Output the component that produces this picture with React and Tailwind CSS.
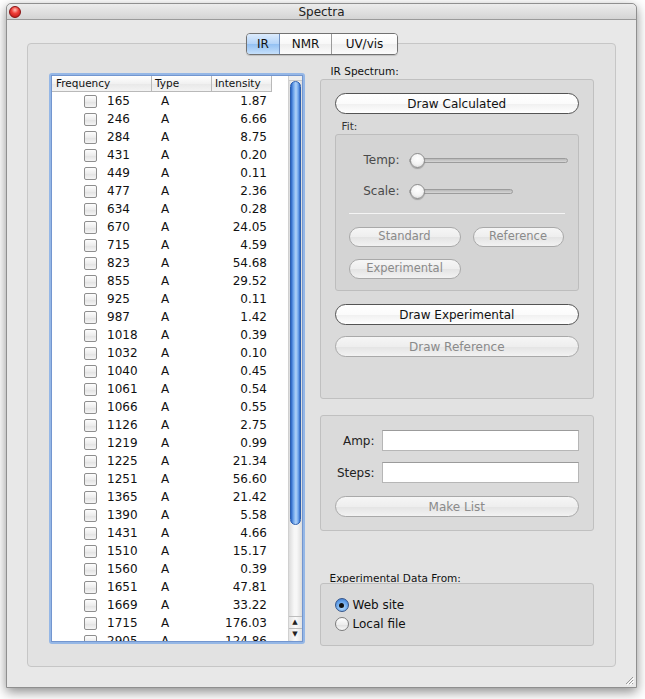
import React from 'react';

const rows = [
  ['165', '1.87'], ['246', '6.66'], ['284', '8.75'], ['431', '0.20'], ['449', '0.11'],
  ['477', '2.36'], ['634', '0.28'], ['670', '24.05'], ['715', '4.59'], ['823', '54.68'],
  ['855', '29.52'], ['925', '0.11'], ['987', '1.42'], ['1018', '0.39'], ['1032', '0.10'],
  ['1040', '0.45'], ['1061', '0.54'], ['1066', '0.55'], ['1126', '2.75'], ['1219', '0.99'],
  ['1225', '21.34'], ['1251', '56.60'], ['1365', '21.42'], ['1390', '5.58'], ['1431', '4.66'],
  ['1510', '15.17'], ['1560', '0.39'], ['1651', '47.81'], ['1669', '33.22'], ['1715', '176.03'],
  ['2905', '124.86'],
];

// aqua push button, enabled or greyed out
const AquaButton = ({ label, disabled, className = '' }) => (
  <div
    className={
      (disabled
        ? 'border-[#a9a9a9] text-[#8a8a8a] bg-[linear-gradient(to_bottom,#f6f6f6_0%,#eeeeee_50%,#e4e4e4_52%,#f2f2f2_100%)] '
        : 'border-[#545454] text-[#111] bg-[linear-gradient(to_bottom,#ffffff_0%,#fbfbfb_50%,#f0f0f0_52%,#ffffff_100%)] ') +
      'flex items-center justify-center rounded-full border ' + className
    }
  >
    {label}
  </div>
);

const Slider = ({ width }) => (
  <div className="relative flex items-center h-[20px]" style={{ width }}>
    <div className="h-[5px] w-full rounded-full border border-[#9c9c9c] bg-[linear-gradient(to_bottom,#b8b8b8,#d6d6d6)]" />
    <div className="absolute left-[1px] top-[3px] w-[15px] h-[15px] rounded-full border border-[#8d8d8d] bg-[radial-gradient(circle_at_50%_35%,#ffffff_0%,#f3f3f3_55%,#cfcfcf_100%)] shadow-[0_1px_1px_rgba(0,0,0,0.25)]" />
  </div>
);

const Checkbox = () => (
  <div className="w-[13px] h-[13px] rounded-[2px] border border-[#8e8e8e] bg-[linear-gradient(to_bottom,#fdfdfd,#ececec_50%,#e2e2e2_52%,#f4f4f4)] shrink-0" />
);

const Radio = ({ on }) =>
  on ? (
    <div className="w-[14px] h-[14px] rounded-full border border-[#34558a] bg-[radial-gradient(circle_at_50%_70%,#b9dcfb_0%,#6aa6ea_55%,#2f6fcc_100%)] flex items-center justify-center shrink-0">
      <div className="w-[5px] h-[5px] rounded-full bg-[#111]" />
    </div>
  ) : (
    <div className="w-[14px] h-[14px] rounded-full border border-[#7c7c7c] bg-[linear-gradient(to_bottom,#ffffff,#ededed_55%,#e2e2e2_60%,#f8f8f8)] shrink-0" />
  );

export default function App() {
  return (
    <div className="w-[645px] h-[699px] bg-white pt-[3px] pl-[6px] font-['DejaVu_Sans',sans-serif] overflow-hidden">
      <div className="relative w-[631px] h-[685px] flex flex-col border border-[#8f8f8f] rounded-t-[5px] shadow-[0_4px_12px_rgba(0,0,0,0.45)] bg-[#e8e8e8]">
        {/* title bar */}
        <div className="h-[16px] flex items-center border-b border-[#9a9a9a] rounded-t-[5px] bg-[linear-gradient(to_bottom,#ececec,#d4d4d4)]">
          <div className="w-[22px] pl-[1px] flex items-center">
            <div className="w-[12px] h-[12px] ml-[1px] rounded-full border border-[#8a1010] bg-[radial-gradient(circle_at_50%_30%,#ffc0b8_0%,#f0403a_40%,#b30f0f_100%)]" />
          </div>
          <div className="flex-1 text-center text-[12px] leading-[16px] text-[#222]">Spectra</div>
          <div className="w-[22px]" />
        </div>

        {/* window content */}
        <div className="flex-1 flex flex-col px-[20px] pb-[20px] pt-[13px]">
          {/* segmented tabs */}
          <div className="self-center relative z-10 h-[22px] flex rounded-[4px] border border-[#727272] overflow-hidden text-[12px] text-[#111] shadow-[0_1px_1px_rgba(0,0,0,0.15)] ml-[1px]">
            <div className="w-[33px] flex items-center justify-center border-r border-[#6f8fbf] bg-[linear-gradient(to_bottom,#dcebfc,#b3d3f8_50%,#94c1f3_52%,#c6e0fb)]">IR</div>
            <div className="w-[52px] flex items-center justify-center border-r border-[#9a9a9a] bg-[linear-gradient(to_bottom,#ffffff,#f8f8f8_50%,#eeeeee_52%,#fbfbfb)]">NMR</div>
            <div className="w-[65px] flex items-center justify-center bg-[linear-gradient(to_bottom,#ffffff,#f8f8f8_50%,#eeeeee_52%,#fbfbfb)]">UV/vis</div>
          </div>

          {/* tab body */}
          <div className="-mt-[12px] flex-1 flex gap-[15px] px-[21px] rounded-[4px] border border-[#c6c6c6] bg-[#e2e2e2]">
            {/* peak list */}
            <div className="mt-[29px] w-[256px] h-[571px] flex rounded-[3px] border-[2px] border-[#95b7e6] bg-white">
              <div className="flex-1 flex border border-[#7396cf] overflow-hidden">
                <div className="flex-1 flex flex-col overflow-hidden">
                  <div className="flex h-[16px] shrink-0 text-[10.5px] text-[#111]">
                    <div className="w-[100px] flex items-center pl-[4px] border-r border-b border-[#b9b9b9] bg-[linear-gradient(to_bottom,#ffffff,#f1f1f1_50%,#e8e8e8_52%,#f3f3f3)]">Frequency</div>
                    <div className="w-[60px] flex items-center pl-[3px] border-r border-b border-[#b9b9b9] bg-[linear-gradient(to_bottom,#ffffff,#f1f1f1_50%,#e8e8e8_52%,#f3f3f3)]">Type</div>
                    <div className="w-[60px] flex items-center pl-[3px] border-r border-b border-[#b9b9b9] bg-[linear-gradient(to_bottom,#ffffff,#f1f1f1_50%,#e8e8e8_52%,#f3f3f3)]">Intensity</div>
                  </div>
                  {rows.map(([f, v]) => (
                    <div key={f} className="flex h-[18px] shrink-0 items-center text-[12px] text-[#111]">
                      <div className="w-[100px] flex items-center pl-[32px]">
                        <Checkbox />
                        <span className="ml-[10px]">{f}</span>
                      </div>
                      <div className="w-[60px] pl-[9px]">A</div>
                      <div className="w-[60px] text-right pr-[5px]">{v}</div>
                    </div>
                  ))}
                </div>
                {/* scroller */}
                <div className="w-[14px] flex flex-col border-l border-[#d0d0d0] bg-[linear-gradient(to_right,#dcdcdc,#f7f7f7_40%,#f7f7f7_60%,#dcdcdc)]">
                  <div className="h-[5px] border-b border-[#c8c8c8] bg-[#eeeeee]" />
                  <div className="h-[444px] mx-[1px] rounded-t-full rounded-b-full border border-[#2c5fb0] bg-[linear-gradient(to_right,#2a64c4,#74aaee_30%,#b2d3f8_55%,#72a7ec_80%,#2f68c6)]" />
                  <div className="flex-1" />
                  <div className="h-[12px] flex items-center justify-center border-t border-[#bdbdbd] text-[7px] leading-none text-[#222] bg-[linear-gradient(to_right,#e4e4e4,#fafafa,#e4e4e4)]">▲</div>
                  <div className="h-[12px] flex items-center justify-center border-t border-[#bdbdbd] text-[7px] leading-none text-[#222] bg-[linear-gradient(to_right,#e4e4e4,#fafafa,#e4e4e4)]">▼</div>
                  <div className="h-[1px]" />
                </div>
              </div>
            </div>

            {/* right column */}
            <div className="w-[275px] flex flex-col pt-[21px]">
              <div className="pl-[11px] text-[10.5px] leading-[13px] text-[#111]">IR Spectrum:</div>
              <div className="mt-[1px] h-[320px] flex flex-col px-[14px] rounded-[3px] border border-[#c0c0c0] bg-[#dadada]">
                <AquaButton label="Draw Calculated" className="mt-[13px] h-[21px] text-[12px]" />
                <div className="mt-[6px] pl-[7px] text-[10.5px] leading-[13px] text-[#333]">Fit:</div>
                <div className="mt-[1px] h-[157px] flex flex-col rounded-[3px] border border-[#bdbdbd] bg-[#d4d4d4]">
                  <div className="mt-[15px] flex items-center h-[20px]">
                    <div className="w-[64px] text-right text-[12px] text-[#4a4a4a]">Temp:</div>
                    <div className="ml-[9px]"><Slider width={159} /></div>
                  </div>
                  <div className="mt-[11px] flex items-center h-[20px]">
                    <div className="w-[64px] text-right text-[12px] text-[#4a4a4a]">Scale:</div>
                    <div className="ml-[9px]"><Slider width={104} /></div>
                  </div>
                  <div className="mt-[12px] mx-[13px] h-[1px] bg-[#f4f4f4]" />
                  <div className="mt-[13px] flex gap-[12px] px-[13px] text-[11.5px]">
                    <AquaButton label="Standard" disabled className="w-[112px] h-[20px]" />
                    <AquaButton label="Reference" disabled className="w-[91px] h-[20px]" />
                  </div>
                  <div className="mt-[12px] flex px-[13px] text-[11.5px]">
                    <AquaButton label="Experimental" disabled className="w-[112px] h-[20px]" />
                  </div>
                </div>
                <AquaButton label="Draw Experimental" className="mt-[13px] h-[21px] text-[12px]" />
                <AquaButton label="Draw Reference" disabled className="mt-[11px] h-[21px] text-[12px]" />
              </div>

              <div className="mt-[16px] h-[116px] flex flex-col px-[14px] rounded-[3px] border border-[#c0c0c0] bg-[#dadada]">
                <div className="mt-[14px] flex items-center h-[21px]">
                  <div className="w-[40px] text-right text-[12px] text-[#222]">Amp:</div>
                  <div className="ml-[7px] flex-1 h-[21px] border border-[#b6b6b6] border-t-[#9b9b9b] bg-white" />
                </div>
                <div className="mt-[11px] flex items-center h-[21px]">
                  <div className="w-[40px] text-right text-[12px] text-[#222]">Steps:</div>
                  <div className="ml-[7px] flex-1 h-[21px] border border-[#b6b6b6] border-t-[#9b9b9b] bg-white" />
                </div>
                <AquaButton label="Make List" disabled className="mt-[13px] h-[21px] text-[12px]" />
              </div>

              <div className="mt-[41px] pl-[10px] text-[10.5px] leading-[12px] text-[#111]">Experimental Data From:</div>
              <div className="-mt-[1px] h-[63px] flex flex-col pl-[14px] pt-[14px] gap-[5px] rounded-[3px] border border-[#c0c0c0] bg-[#dadada] text-[12px] text-[#111]">
                <div className="flex items-center gap-[4px] h-[14px]"><Radio on /><span>Web site</span></div>
                <div className="flex items-center gap-[4px] h-[14px]"><Radio /><span>Local file</span></div>
              </div>
            </div>
          </div>
        </div>

        {/* resize grip */}
        <svg className="absolute right-[2px] bottom-[2px]" width="10" height="10" viewBox="0 0 10 10">
          <path d="M9 2 L2 9 M9 5 L5 9 M9 8 L8 9" stroke="#9a9a9a" strokeWidth="1" />
          <path d="M10 3 L3 10 M10 6 L6 10" stroke="#ffffff" strokeWidth="1" />
        </svg>
      </div>
    </div>
  );
}
